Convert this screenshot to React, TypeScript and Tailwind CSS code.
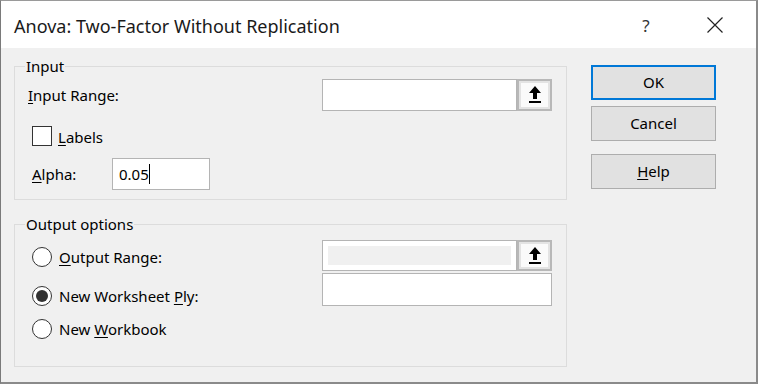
import React from "react";

const font = { fontFamily: '"Noto Sans", "Open Sans", sans-serif' };

function UploadIcon() {
  return (
    <svg width="12" height="18" viewBox="0 0 12 18">
      <polygon points="6,0 0,7 4,7 4,13 8,13 8,7 12,7" fill="#000" />
      <rect x="0" y="15" width="12" height="2" fill="#000" />
    </svg>
  );
}

function RefButton() {
  return (
    <div className="w-[35px] h-full border-[2px] border-[#b8b8b8] bg-[#e3e3e3] p-[2px] flex">
      <div className="flex-1 bg-[#fafafa] flex items-center justify-center">
        <UploadIcon />
      </div>
    </div>
  );
}

function Radio({ checked }: { checked?: boolean }) {
  return (
    <div className="w-[20px] h-[20px] rounded-full border border-[#333] bg-white flex items-center justify-center shrink-0">
      {checked && <div className="w-[12px] h-[12px] rounded-full bg-[#333]" />}
    </div>
  );
}

function Btn({ children, primary, className }: { children: React.ReactNode; primary?: boolean; className?: string }) {
  return (
    <div
      className={
        "w-[125px] h-[35px] flex items-center justify-center bg-[#e1e1e1] text-[15px] text-black " +
        (primary ? "border-2 border-[#0078d7]" : "border border-[#adadad]") +
        " " +
        (className ?? "")
      }
    >
      {children}
    </div>
  );
}

export default function App() {
  return (
    <div
      className="w-[758px] h-[384px] bg-[#f0f0f0] border-t border-l border-r-2 border-b-2 border-t-[#9a9a9a] border-l-[#7a7a7a] border-r-[#8a8a8a] border-b-[#8a8a8a] flex flex-col text-black"
      style={font}
    >
      {/* title bar */}
      <div className="h-[47px] bg-white flex items-center shrink-0">
        <div className="pl-[13px] text-[18px] text-[#1a1a1a] flex-1 pt-[4px]">Anova: Two-Factor Without Replication</div>
        <div className="w-[58px] flex justify-center text-[17px] text-[#333] pt-[3px]">?</div>
        <div className="w-[80px] mr-[1px] flex justify-center">
          <svg width="16" height="16" viewBox="0 0 16 16">
            <path d="M0.5 0.5 L15.5 15.5 M15.5 0.5 L0.5 15.5" stroke="#222" strokeWidth="1.2" fill="none" />
          </svg>
        </div>
      </div>

      {/* body */}
      <div className="flex pl-[13px] pt-[8px] text-[15px]">
        <div className="w-[553px] flex flex-col">
          {/* Input group */}
          <fieldset className="border border-[#dcdcdc] pb-[9px]">
            <legend className="ml-[10px] px-[1px] leading-[20px]">Input</legend>
            <div className="mt-[3px] h-[32px] flex items-center pl-[13px] pr-[14px]">
              <span className="flex-1 pt-[1px]">
                <u className="underline-offset-2">I</u>nput Range:
              </span>
              <div className="flex h-full">
                <div className="w-[195px] h-full bg-white border border-[#b4b4b4]" />
                <RefButton />
              </div>
            </div>
            <div className="mt-[15px] h-[20px] flex items-center pl-[17px]">
              <div className="w-[20px] h-[20px] border border-[#333] bg-white" />
              <span className="ml-[6px] pt-[2px]">
                <u className="underline-offset-2">L</u>abels
              </span>
            </div>
            <div className="mt-[12px] h-[32px] flex items-center pl-[17px]">
              <span className="w-[80px]">
                <u className="underline-offset-2">A</u>lpha:
              </span>
              <div className="w-[98px] h-full bg-white border border-[#b4b4b4] flex items-center pl-[6px]">
                0.05<span className="w-px h-[20px] bg-black" />
              </div>
            </div>
          </fieldset>

          {/* Output group */}
          <fieldset className="mt-[14px] border border-[#dcdcdc] pb-[20px]">
            <legend className="ml-[10px] px-[1px] leading-[20px]">Output options</legend>
            <div className="flex pr-[14px]">
              <div className="flex-1 flex flex-col pl-[17px]">
                <div className="h-[46px] flex items-center">
                  <Radio />
                  <span className="ml-[7px]">
                    <u className="underline-offset-2">O</u>utput Range:
                  </span>
                </div>
                <div className="h-[32px] flex items-center">
                  <Radio checked />
                  <span className="ml-[7px]">
                    New Worksheet <u className="underline-offset-2">P</u>ly:
                  </span>
                </div>
                <div className="h-[34px] flex items-center">
                  <Radio />
                  <span className="ml-[7px]">
                    New <u className="underline-offset-2">W</u>orkbook
                  </span>
                </div>
              </div>
              <div className="flex flex-col pt-[6px]">
                <div className="flex h-[31px]">
                  <div className="w-[195px] h-full bg-white border border-[#b4b4b4] p-[5px]">
                    <div className="w-full h-full bg-[#f0f0f0]" />
                  </div>
                  <RefButton />
                </div>
                <div className="mt-[2px] w-[230px] h-[33px] bg-white border border-[#b4b4b4]" />
              </div>
            </div>
          </fieldset>
        </div>

        {/* buttons */}
        <div className="ml-[24px] pt-[9px] flex flex-col">
          <Btn primary>OK</Btn>
          <Btn className="mt-[6px]">Cancel</Btn>
          <Btn className="mt-[13px]">
            <span>
              <u className="underline-offset-2">H</u>elp
            </span>
          </Btn>
        </div>
      </div>
    </div>
  );
}
